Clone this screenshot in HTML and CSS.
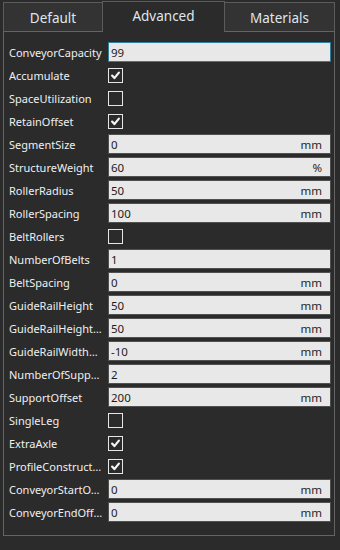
FILE: index.html
```html
<!DOCTYPE html>
<html><head>
    <title>Conveyor Properties</title>
    <meta name="viewport" content="width=device-width, initial-scale=1">
    <link rel="stylesheet" href="styles.css">
    </head>
    <body>
    <div class="tabs">
        <div class="tab">Default</div>
        <div class="tab tab-active">Advanced</div>
        <div class="tab">Materials</div>
    </div>
    <div class="panel">
        <div class="row"><span class="label">ConveyorCapacity</span><div class="field field-focus"><span>99</span></div></div>
        <div class="row"><span class="label">Accumulate</span><div class="check checked"><svg viewBox="0 0 15 15"><path d="M3.6 7.6 L6.2 10.5 L11.4 4.2"/></svg></div></div>
        <div class="row"><span class="label">SpaceUtilization</span><div class="check"></div></div>
        <div class="row"><span class="label">RetainOffset</span><div class="check checked"><svg viewBox="0 0 15 15"><path d="M3.6 7.6 L6.2 10.5 L11.4 4.2"/></svg></div></div>
        <div class="row"><span class="label">SegmentSize</span><div class="field"><span>0</span><span class="unit">mm</span></div></div>
        <div class="row"><span class="label">StructureWeight</span><div class="field"><span>60</span><span class="unit">%</span></div></div>
        <div class="row"><span class="label">RollerRadius</span><div class="field"><span>50</span><span class="unit">mm</span></div></div>
        <div class="row"><span class="label">RollerSpacing</span><div class="field"><span>100</span><span class="unit">mm</span></div></div>
        <div class="row"><span class="label">BeltRollers</span><div class="check"></div></div>
        <div class="row"><span class="label">NumberOfBelts</span><div class="field"><span>1</span></div></div>
        <div class="row"><span class="label">BeltSpacing</span><div class="field"><span>0</span><span class="unit">mm</span></div></div>
        <div class="row"><span class="label">GuideRailHeight</span><div class="field"><span>50</span><span class="unit">mm</span></div></div>
        <div class="row"><span class="label">GuideRailHeight…</span><div class="field"><span>50</span><span class="unit">mm</span></div></div>
        <div class="row"><span class="label">GuideRailWidth…</span><div class="field"><span>-10</span><span class="unit">mm</span></div></div>
        <div class="row"><span class="label">NumberOfSupp…</span><div class="field"><span>2</span></div></div>
        <div class="row"><span class="label">SupportOffset</span><div class="field"><span>200</span><span class="unit">mm</span></div></div>
        <div class="row"><span class="label">SingleLeg</span><div class="check"></div></div>
        <div class="row"><span class="label">ExtraAxle</span><div class="check checked"><svg viewBox="0 0 15 15"><path d="M3.6 7.6 L6.2 10.5 L11.4 4.2"/></svg></div></div>
        <div class="row"><span class="label">ProfileConstruct…</span><div class="check checked"><svg viewBox="0 0 15 15"><path d="M3.6 7.6 L6.2 10.5 L11.4 4.2"/></svg></div></div>
        <div class="row"><span class="label">ConveyorStartO…</span><div class="field"><span>0</span><span class="unit">mm</span></div></div>
        <div class="row"><span class="label">ConveyorEndOff…</span><div class="field"><span>0</span><span class="unit">mm</span></div></div>
    </div>
    </body>
    </html>
```

FILE: styles.css
```css
html {
    background-color: #2b2b2b;
}
body {
    margin: 0;
    padding-top: 1px;
    font-family: "Noto Sans", "Open Sans", sans-serif;
    color: #eef0f2;
}
.tabs {
    display: flex;
    align-items: flex-end;
    margin-left: 3px;
    width: 332px;
    height: 30px;
}
.tab {
    box-sizing: border-box;
    height: 29px;
    border: 1px solid #5c5c5c;
    border-bottom: none;
    background-color: #333333;
    font-size: 13.5px;
    color: #dfe7ee;
    text-align: center;
    line-height: 30px;
}
.tab:nth-child(1) {
    width: 100px;
}
.tab:nth-child(2) {
    width: 123px;
    margin-left: -1px;
}
.tab:nth-child(3) {
    width: 111px;
    margin-left: -1px;
}
.tab-active {
    height: 31px;
    margin-bottom: -1px;
    background-color: #2b2b2b;
    line-height: 29px;
    position: relative;
}
.panel {
    box-sizing: border-box;
    margin-left: 3px;
    width: 332px;
    height: 505px;
    border: 1px solid #646464;
    padding: 10px 3px 0 5px;
    display: flex;
    flex-direction: column;
    gap: 3px;
}
.row {
    display: flex;
    align-items: center;
    height: 20px;
}
.label {
    width: 99px;
    flex: none;
    font-size: 11px;
    white-space: nowrap;
    overflow: hidden;
}
.field {
    box-sizing: border-box;
    flex: 1;
    height: 20px;
    display: flex;
    justify-content: space-between;
    align-items: center;
    background-color: #e8e8e8;
    border: 1px solid #505050;
    padding: 0 8px 0 2px;
    font-size: 11.5px;
    color: #1c1c1c;
}
.field-focus {
    border-color: #2f7f9c;
}
.unit {
    color: #262626;
}
.check {
    box-sizing: border-box;
    width: 15px;
    height: 15px;
    border: 1px solid #e6e6e6;
}
.check svg {
    display: block;
    width: 13px;
    height: 13px;
}
.check path {
    fill: none;
    stroke: #f4f4f4;
    stroke-width: 2.6;
    stroke-linecap: round;
    stroke-linejoin: round;
}
```
